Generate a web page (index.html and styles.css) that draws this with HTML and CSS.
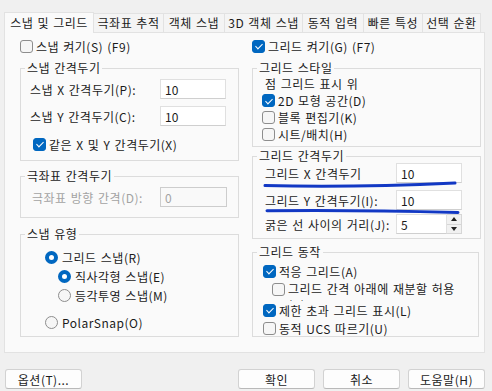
FILE: index.html
```html
<!DOCTYPE html>
<html>
<head>
<meta charset="utf-8" />
<title>제도 설정</title>
<link rel="stylesheet" href="styles.css">
</head>
<body>
<div class="dialog">
	<div class="tabs">
		<div class="tab active" style="width:90px">스냅 및 그리드</div>
		<div class="tab" style="width:70px">극좌표 추적</div>
		<div class="tab" style="width:61px">객체 스냅</div>
		<div class="tab" style="width:78px">3D 객체 스냅</div>
		<div class="tab" style="width:61px">동적 입력</div>
		<div class="tab" style="width:59px">빠른 특성</div>
		<div class="tab" style="width:58px">선택 순환</div>
	</div>
	<div class="panel">
		<div class="col col-left">
			<div class="check top"><span class="cb"></span>스냅 켜기(S) (F9)</div>
			<fieldset class="fs fs-snap">
				<legend>스냅 간격두기</legend>
				<div class="field"><label>스냅 X 간격두기(P):</label><input class="num" type="text" value="10"></div>
				<div class="field f2"><label>스냅 Y 간격두기(C):</label><input class="num" type="text" value="10"></div>
				<div class="check same"><span class="cb on"></span>같은 X 및 Y 간격두기(X)</div>
			</fieldset>
			<fieldset class="fs fs-polar">
				<legend>극좌표 간격두기</legend>
				<div class="field disabled"><label>극좌표 방향 간격(D):</label><input class="num" type="text" value="0" disabled></div>
			</fieldset>
			<fieldset class="fs fs-type">
				<legend>스냅 유형</legend>
				<div class="radio r1"><span class="rb on"></span>그리드 스냅(R)</div>
				<div class="radio sub r2"><span class="rb on"></span>직사각형 스냅(E)</div>
				<div class="radio sub r3"><span class="rb"></span>등각투영 스냅(M)</div>
				<div class="radio r4"><span class="rb"></span>PolarSnap(O)</div>
			</fieldset>
		</div>
		<div class="col col-right">
			<div class="check top"><span class="cb on"></span>그리드 켜기(G) (F7)</div>
			<fieldset class="fs fs-style">
				<legend>그리드 스타일</legend>
				<div class="line">점 그리드 표시 위</div>
				<div class="check row"><span class="cb on"></span>2D 모형 공간(D)</div>
				<div class="check row"><span class="cb"></span>블록 편집기(K)</div>
				<div class="check row"><span class="cb"></span>시트/배치(H)</div>
			</fieldset>
			<fieldset class="fs fs-gap">
				<legend>그리드 간격두기</legend>
				<div class="field"><label>그리드 X 간격두기</label><input class="num" type="text" value="10"></div>
				<div class="field g2"><label>그리드 Y 간격두기(I):</label><input class="num" type="text" value="10"></div>
				<div class="field g3"><label>굵은 선 사이의 거리(J):</label><input class="num short" type="text" value="5"><span class="spin"><span class="up"></span><span class="down"></span></span></div>
			</fieldset>
			<fieldset class="fs fs-act">
				<legend>그리드 동작</legend>
				<div class="check a1"><span class="cb on"></span>적응 그리드(A)</div>
				<div class="check a2"><span class="cb"></span><span class="wrap">그리드 간격 아래에 재분할 허용 (B)</span></div>
				<div class="check a3"><span class="cb on"></span>제한 초과 그리드 표시(L)</div>
				<div class="check a4"><span class="cb"></span>동적 UCS 따르기(U)</div>
			</fieldset>
		</div>
	</div>
	<div class="buttons">
		<button class="btn">옵션(T)...</button>
		<div class="btn-group">
			<button class="btn">확인</button>
			<button class="btn">취소</button>
			<button class="btn">도움말(H)</button>
		</div>
	</div>
	<svg class="marks" width="492" height="391" viewBox="0 0 492 391">
		<path d="M265 185.5 C 320 187, 400 185.5, 455 183" />
		<path d="M267 210.8 C 330 210, 400 211, 458 212.5" />
	</svg>
</div>
</body>
</html>
```

FILE: styles.css
```css
* {
	margin: 0;
	padding: 0;
	box-sizing: border-box;
}
html,body {
	width: 100%;
	height: 100%;
	background: #f0f0f0;
	overflow: hidden;
}
body {
	font-family: "Noto Sans CJK KR", sans-serif;
	font-size: 12px;
	letter-spacing: 0.5px;
	word-spacing: 1px;
	color: #1b1b1b;
}
.dialog {
	position: relative;
	width: 492px;
	height: 391px;
	padding: 12px 7px 0 4px;
}
.tabs {
	display: flex;
	align-items: flex-end;
	height: 20px;
}
.tab {
	height: 19px;
	line-height: 18px;
	text-align: center;
	white-space: nowrap;
	background: #f4f4f4;
	border-top: 1px solid #e2e2e2;
	border-right: 1px solid #e2e2e2;
	color: #1b1b1b;
}
.tab.active {
	height: 21px;
	margin-bottom: -1px;
	line-height: 19px;
	background: #fafafa;
	border: 1px solid #e2e2e2;
	border-bottom: none;
	position: relative;
	z-index: 1;
}
.panel {
	display: flex;
	width: 481px;
	height: 321px;
	padding: 6px 2px 0 15px;
	background: #fafafa;
	border: 1px solid #e2e2e2;
}
.col {
	display: flex;
	flex-direction: column;
}
.col-left {
	width: 219px;
}
.col-right {
	width: 229px;
	margin-left: 13px;
}
.check, .radio {
	display: flex;
	align-items: center;
	white-space: nowrap;
}
.check.top {
	height: 14px;
}
.cb {
	position: relative;
	flex: none;
	width: 13px;
	height: 13px;
	margin-right: 3px;
	border: 1px solid #8d8d8d;
	border-radius: 3px;
	background: #f6f6f6;
}
.cb.on {
	background: #0067c0;
	border-color: #0067c0;
}
.cb.on::after {
	content: "";
	position: absolute;
	left: 3.5px;
	top: 1.5px;
	width: 3px;
	height: 6px;
	border: solid #fff;
	border-width: 0 1.4px 1.4px 0;
	transform: rotate(45deg);
}
.rb {
	flex: none;
	width: 13px;
	height: 13px;
	margin-right: 4px;
	border: 1px solid #8d8d8d;
	border-radius: 50%;
	background: #f6f6f6;
}
.rb.on {
	border: 4px solid #0067c0;
	background: #fff;
}

/* group boxes */
.fs {
	border: 1px solid #dcdcdc;
	min-width: 0;
}
.fs legend {
	margin-left: 4px;
	padding: 0 2px;
	line-height: 14px;
	white-space: nowrap;
}
.field {
	display: flex;
	align-items: center;
	height: 20px;
	white-space: nowrap;
}
.field label {
	flex: none;
}
.num {
	width: 66px;
	height: 20px;
	padding: 0 4px;
	border: 1px solid #e0e0e0;
	border-bottom-color: #cfcfcf;
	background: #fff;
	font-family: "Noto Sans CJK KR", sans-serif;
	font-size: 12px;
	color: #1b1b1b;
	outline: none;
}
.disabled label {
	color: #a3a3a3;
}
.num:disabled {
	background: #f9f9f9;
	border-color: #cdcdcd;
	color: #a3a3a3;
}

/* left column */
.fs-snap {
	margin-top: 8px;
	padding: 4px 0 9px 0;
}
.fs-snap .field {
	padding-left: 9px;
}
.fs-snap .field label {
	width: 130px;
}
.fs-snap .f2 {
	margin-top: 7px;
}
.fs-snap .same {
	height: 14px;
	margin-top: 11px;
	padding-left: 12px;
}
.fs-polar {
	margin-top: 8px;
	padding: 4px 0 10px 0;
}
.fs-polar .field {
	padding-left: 11px;
}
.fs-polar .field label {
	width: 128px;
}
.fs-polar .num {
	width: 67px;
}
.fs-type {
	margin-top: 9px;
	padding: 8px 0 6px 0;
}
.radio {
	height: 16px;
	padding-left: 24px;
}
.radio.sub {
	padding-left: 37px;
	margin-top: 3px;
}
.radio.r4 {
	margin-top: 11px;
}

/* right column */
.fs-style {
	margin-top: 8px;
	padding: 0 0 3px 0;
}
.fs-style .line {
	height: 17px;
	line-height: 17px;
	padding-left: 12px;
}
.fs-style .row {
	height: 17px;
	padding-left: 9px;
}
.fs-gap {
	margin-top: 2px;
	padding: 0 0 4px 0;
}
.fs-gap .field {
	padding-left: 12px;
}
.fs-gap .field label {
	width: 131px;
}
.fs-gap .g2 {
	margin-top: 7px;
}
.fs-gap .g3 {
	margin-top: 4px;
}
.num.short {
	width: 51px;
}
.spin {
	display: flex;
	flex-direction: column;
	width: 15px;
	height: 20px;
	border: 1px solid #d6d6d6;
	border-left: none;
	background: #f1f1f1;
}
.spin span {
	flex: 1;
	display: flex;
	align-items: center;
	justify-content: center;
}
.spin .up {
	border-bottom: 1px solid #d6d6d6;
}
.spin .up::after {
	content: "";
	border: 3.5px solid transparent;
	border-bottom: 4px solid #222;
	border-top: none;
}
.spin .down::after {
	content: "";
	border: 3.5px solid transparent;
	border-top: 4px solid #222;
	border-bottom: none;
}
.fs-act {
	margin-top: 6px;
	margin-right: 2px;
	padding: 4px 0 0 0;
}
.fs-act .check {
	height: 16px;
	padding-left: 10px;
}
.fs-act .a2 {
	align-items: flex-start;
	height: 20px;
	margin-top: 2px;
	padding-left: 19px;
	overflow: hidden;
}
.fs-act .a2 .cb {
	margin-top: 2px;
}
.fs-act .a2 .wrap {
	width: 176px;
	line-height: 16px;
	white-space: normal;
}
.fs-act .a3 {
	margin-top: 1px;
}
.fs-act .a4 {
	margin-top: 2px;
}

/* bottom buttons */
.buttons {
	display: flex;
	justify-content: space-between;
	margin-top: 16px;
	padding-left: 1px;
	width: 481px;
}
.btn-group {
	display: flex;
	gap: 8px;
}
.btn {
	width: 77px;
	height: 20px;
	border: 1px solid #d2d2d2;
	border-bottom-color: #b9b9b9;
	border-radius: 3px;
	background: #fdfdfd;
	font-family: "Noto Sans CJK KR", sans-serif;
	font-size: 12px;
	letter-spacing: 0.5px;
	color: #1b1b1b;
}

/* hand drawn marks over the grid spacing rows */
.marks {
	position: absolute;
	left: 0;
	top: 0;
	pointer-events: none;
}
.marks path {
	fill: none;
	stroke: #1238c4;
	stroke-width: 3;
	stroke-linecap: round;
}
```
